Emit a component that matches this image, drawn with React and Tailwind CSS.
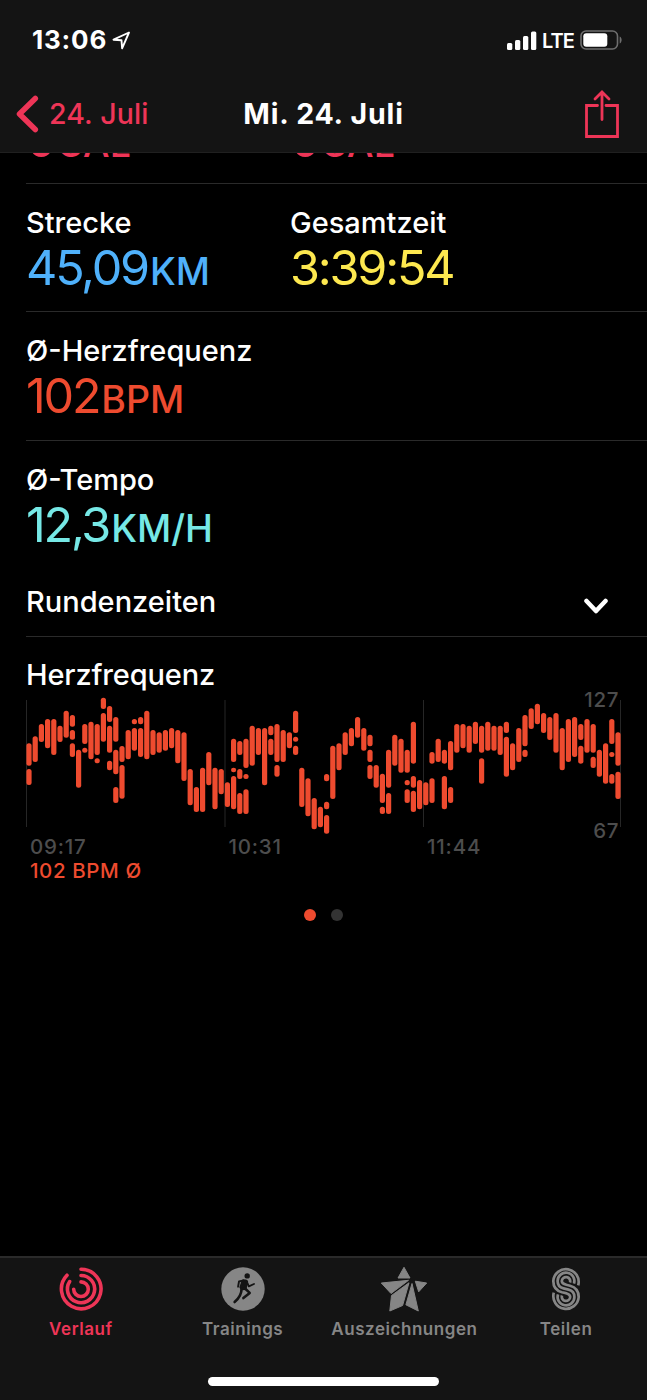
import { clsx } from 'clsx';

// heart rate ranges, one entry per slot, values are [top, bottom] pairs
const heartRate = [
  [175, 242, 252, 300], [154, 231], [117, 171], [102, 190], [102, 210], [122, 171], [77, 158], [90, 125, 135, 164, 175, 216],
  [194, 308], [117, 177, 188, 203], [110, 223], [117, 210, 220, 235], [38, 72, 84, 170], [63, 111, 122, 203, 227, 256],
  [96, 170, 194, 268, 306, 354], [183, 231, 240, 341], [135, 223], [102, 118, 129, 197], [96, 118, 129, 216], [77, 223],
  [135, 210], [142, 203], [135, 197], [129, 190], [135, 235], [142, 288], [252, 361], [306, 381], [248, 381], [201, 301],
  [248, 373], [252, 328], [292, 366], [161, 231, 248, 262, 273, 373], [168, 210, 252, 282, 324, 387],
  [161, 249, 267, 282, 313, 387], [122, 242], [129, 210], [129, 301], [122, 151, 161, 210], [117, 231, 240, 275], [135, 231],
  [142, 190], [77, 144, 155, 170, 182, 210], [248, 366], [280, 394], [339, 433], [365, 427], [267, 289, 350, 373, 390, 446],
  [182, 342], [175, 256], [142, 210], [129, 184], [96, 158], [129, 197], [149, 184, 194, 231, 240, 282], [240, 308],
  [266, 354, 365, 387], [194, 308, 324, 387], [149, 242], [161, 263], [194, 263, 285, 301, 313, 354],
  [110, 236, 273, 308, 317, 381], [285, 373], [292, 361], [201, 236, 280, 354], [161, 231], [194, 236, 273, 373],
  [168, 256, 306, 354], [117, 203], [117, 190], [122, 203], [110, 177], [122, 203, 220, 296], [110, 197], [122, 197],
  [122, 210], [110, 144, 155, 275], [175, 256], [129, 231], [90, 184, 194, 216], [70, 132], [56, 118], [84, 144], [96, 165],
  [84, 203], [129, 256], [102, 231], [96, 216], [117, 165, 182, 236], [102, 203], [117, 203, 215, 249], [194, 275],
  [175, 296], [102, 177, 201, 216, 267, 296], [142, 242, 260, 342],
];

const StatusBar = () => (
  <div className="flex h-[76px] items-center pl-8 pr-[25px] pt-1">
    <span className="text-[26px] font-bold leading-8 tracking-[0.8px]">13:06</span>
    <svg className="ml-[5px] h-[19px] w-[19px]" viewBox="0 0 19 19" fill="none" stroke="currentColor" strokeWidth="1.9" strokeLinejoin="round">
      <path d="M17 1.5 1.5 8.700l8 .6.6 8z" />
    </svg>
    <svg className="ml-auto h-[19px] w-[30px]" viewBox="0 0 30 19" fill="currentColor">
      <rect x="0" y="12" width="5.3" height="7" rx="1.5" />
      <rect x="8" y="9" width="5.3" height="10" rx="1.5" />
      <rect x="16" y="5" width="5.3" height="14" rx="1.5" />
      <rect x="24" y="0.5" width="5.3" height="18.5" rx="1.5" />
    </svg>
    <span className="ml-[5px] mt-0.5 text-[20px] font-semibold leading-8 tracking-[-0.9px]">LTE</span>
    <svg className="ml-1.5 h-5 w-[42px]" viewBox="0 0 42 20">
      <rect x="1" y="1" width="36.5" height="18" rx="5" fill="none" stroke="#6e6e6e" strokeWidth="1.6" />
      <rect x="3.3" y="3.3" width="24" height="13.4" rx="3" fill="#fff" />
      <path d="M39.7 6.5c2.6 1.3 2.6 5.7 0 7z" fill="#6e6e6e" />
    </svg>
  </div>
);

const NavBar = () => (
  <div className="grid h-[76px] grid-cols-3 items-center px-4">
    <div className="flex items-center text-[#ee3557]">
      <svg className="h-[38px] w-[23px]" viewBox="0 0 23 38" fill="none" stroke="currentColor" strokeWidth="5.5" strokeLinecap="round" strokeLinejoin="round">
        <path d="M19.3 3.5 3.5 19l15.8 15.5" />
      </svg>
      <span className="ml-2.5 whitespace-nowrap text-[28.5px] font-medium leading-9 tracking-[0.1px]">24. Juli</span>
    </div>
    <h1 className="whitespace-nowrap text-center text-[28.5px] font-bold leading-9 tracking-[0.8px]">Mi. 24. Juli</h1>
    <svg className="ml-auto mr-[11px] h-12 w-9 text-[#ee3557]" viewBox="0 0 36 48" fill="none" stroke="currentColor" strokeWidth="2.8" strokeLinecap="round">
      <path d="M13.5 15.5h-11v31h31v-31H22" />
      <path d="M18 29.5V2.3M11 9l7-7 7 7" />
    </svg>
  </div>
);

const Value = ({ value, unit }) => (
  <>
    <span className="tracking-[-2.2px]">{value}</span>
    {unit && <span className="ml-0.5 text-[37.5px] font-medium">{unit}</span>}
  </>
);

const Stat = ({ label, value, unit, color }) => (
  <div className="w-[264px]">
    <div className="text-[29px] font-medium leading-[37px]">{label}</div>
    <div className={clsx('whitespace-nowrap pt-px text-[48.5px] leading-[52px]', color)}>
      <Value value={value} unit={unit} />
    </div>
  </div>
);

const StatRow = ({ children, className }) => (
  <div className={clsx('ml-[26px] flex pt-5', className)}>{children}</div>
);

const HeartRateChart = () => (
  <section className="ml-[26px]">
    <h2 className="mt-[19px] text-[29px] font-medium leading-[37px] tracking-[-0.15px]">Herzfrequenz</h2>
    <div className="grid">
      <svg className="col-start-1 row-start-1 h-[144px] w-[600px]" viewBox="0 0 600 144">
        <g fill="#262626">
          <rect x="0" y="7" width="1" height="127" />
          <rect x="198.5" y="7" width="1" height="127" />
          <rect x="397" y="7" width="1" height="127" />
          <rect x="594" y="7" width="1" height="127" />
        </g>
        {heartRate.map((slot, i) =>
          slot.map((top, j) =>
            j % 2 === 0 ? (
              <rect key={`${i}-${j}`} x={0.4 + i * 6.2} y={top / 3 - 8} width="5.2" height={(slot[j + 1] - top) / 3} rx="2.5" fill="#ee4b2f" />
            ) : null
          )
        )}
      </svg>
      <div className="col-start-1 row-start-1 flex w-[593px] flex-col justify-between text-right text-[20.5px] font-medium leading-[26px] tracking-[0.6px] text-[#4d4d4d]">
        <span className="-mt-1.5">127</span>
        <span className="-mb-[7px]">67</span>
      </div>
    </div>
    <div className="-mt-[3px] flex text-[20.5px] font-medium leading-[26px] tracking-[0.8px] text-[#4d4d4d]">
      <span className="w-[198.5px] pl-1">09:17</span>
      <span className="w-[198.5px] pl-1">10:31</span>
      <span className="pl-1">11:44</span>
    </div>
    <div className="pl-1 text-[20.5px] font-medium leading-[22px] tracking-[0.6px] text-[#ee4b2f]">102 BPM Ø</div>
  </section>
);

const RingsIcon = () => (
  <svg className="h-11 w-11" viewBox="0 0 44 44" fill="none" stroke="currentColor" strokeWidth="3.6" strokeLinecap="round">
    <path d="M22 2.2A19.8 19.8 0 1 1 8 8.2" />
    <path d="M22 8.5A13.6 13.6 0 1 1 10.7 14.6" />
    <path d="M22 14.9A7.3 7.3 0 1 1 14.7 22.2" />
  </svg>
);

const RunnerIcon = () => (
  <svg className="h-11 w-11" viewBox="0 0 44 44" fill="none">
    <circle cx="22" cy="22" r="21.7" fill="currentColor" />
    <g stroke="#141414" strokeLinecap="round" strokeLinejoin="round">
      <circle cx="26.2" cy="8.9" r="2.7" fill="#141414" stroke="none" />
      <path d="M22 13.8h2.8l1 .8-1.4 7-3.4.4-1.3-1.8z" fill="#141414" strokeWidth="2.6" />
      <path d="M22.6 13.3l-4.6 1.2-.9 5.2" strokeWidth="1.9" />
      <path d="M25.8 14.7l2 4.6 5.2-2.3" strokeWidth="1.9" />
      <path d="M23.8 21.3l4.9 4.6-6.3 5.2" strokeWidth="2.6" />
      <path d="M20.6 21.2c.1 6.2-2.2 9.7-7 13.8" strokeWidth="2.6" />
    </g>
  </svg>
);

const StarIcon = () => (
  <svg className="h-[46px] w-12" viewBox="0 0 48 46" fill="currentColor" stroke="currentColor" strokeWidth="1" strokeLinejoin="round">
    <path d="M24 1.3 30 12H18z" />
    <path d="M1.3 17 28.5 14.3 11 27.5z" />
    <path d="M35.3 15.2 46.7 17l-8 8.8z" />
    <path d="M11.5 29.5 29 16.8 22.6 39.5 9.8 45z" />
    <path d="M32 17.5 38.3 45l-12.4-6.2z" />
  </svg>
);

const SharingIcon = () => (
  <svg className="h-[46px] w-[30px]" viewBox="0 0 30 46" fill="none" stroke="currentColor" strokeWidth="2.7">
    <path d="M27.2 19.3A12.7 12.7 0 1 0 2.3 15C2.3 21 6 25 11 26.3C15.5 27.2 19.2 28 19.2 31A4.2 4.2 0 1 1 11 29.5" />
    <path d="M23 17.6A8.4 8.4 0 1 0 6.6 15C6.6 19 9 21.6 12.5 22.4L17.5 23.6C21 24.4 23.4 27 23.4 31A8.4 8.4 0 1 1 7 28.4" />
    <path d="M19 16.5A4.2 4.2 0 1 0 10.8 15C10.8 18 14.5 18.8 19 19.7C24 21 27.7 25 27.7 31A12.7 12.7 0 1 1 2.8 26.7" />
  </svg>
);

const tabs = [
  { label: 'Verlauf', Icon: RingsIcon, active: true },
  { label: 'Trainings', Icon: RunnerIcon },
  { label: 'Auszeichnungen', Icon: StarIcon },
  { label: 'Teilen', Icon: SharingIcon },
];

const TabBar = () => (
  <footer className="flex h-36 flex-col border-t-2 border-[#2a2a2a] bg-[#141414]">
    <nav className="grid grid-cols-4">
      {tabs.map(({ label, Icon, active }) => (
        <div key={label} className={clsx('flex flex-col items-center pt-[7px]', active ? 'text-[#ee3557]' : 'text-[#868686]')}>
          <div className="flex h-[47px] items-center">
            <Icon />
          </div>
          <span className="mt-[5px] text-[17px] font-semibold leading-6 tracking-[0.55px]">{label}</span>
        </div>
      ))}
    </nav>
    <div className="mx-auto mb-3.5 mt-auto h-[9px] w-[231px] rounded-full bg-white" />
  </footer>
);

const App = () => {
  return (
    <div className="flex h-[1400px] w-[647px] flex-col overflow-hidden bg-black font-['Inter',sans-serif] text-white">
      <header className="h-[153px] shrink-0 border-b border-[#202020] bg-[#141414]">
        <StatusBar />
        <NavBar />
      </header>
      <main className="flex-1">
        {/* row scrolled under the header */}
        <div className="ml-[26px] flex h-[31px] items-start overflow-hidden border-b border-[#2a2a2a] text-[#ee3557]">
          {['active', 'total'].map((key) => (
            <div key={key} className="-mt-[39px] w-[264px] whitespace-nowrap text-[48.5px] leading-[52px]">
              <Value value="0" unit="CAL" />
            </div>
          ))}
        </div>
        <StatRow className="h-[128px] border-b border-[#2a2a2a]">
          <Stat label="Strecke" value="45,09" unit="KM" color="text-[#4fb1fb]" />
          <Stat label="Gesamtzeit" value="3:39:54" color="text-[#fde84f]" />
        </StatRow>
        <StatRow className="h-[129px] border-b border-[#2a2a2a]">
          <Stat label="Ø-Herzfrequenz" value="102" unit="BPM" color="text-[#ee4b2f]" />
        </StatRow>
        <StatRow className="h-[126px]">
          <Stat label="Ø-Tempo" value="12,3" unit="KM/H" color="text-[#76e8e6]" />
        </StatRow>
        <div className="ml-[26px] flex h-[70px] items-center justify-between border-b border-[#2a2a2a] pr-[39px]">
          <span className="text-[29px] font-medium leading-[37px]">Rundenzeiten</span>
          <svg className="mt-2 h-4 w-6" viewBox="0 0 24 16" fill="none" stroke="currentColor" strokeWidth="4.5" strokeLinecap="round" strokeLinejoin="round">
            <path d="M2.5 3l9.5 10L21.5 3" />
          </svg>
        </div>
        <HeartRateChart />
        <div className="mt-[27px] flex justify-center gap-[15px]">
          <span className="h-3 w-3 rounded-full bg-[#ee4b2f]" />
          <span className="h-3 w-3 rounded-full bg-[#333]" />
        </div>
      </main>
      <TabBar />
    </div>
  );
};

export default App;
